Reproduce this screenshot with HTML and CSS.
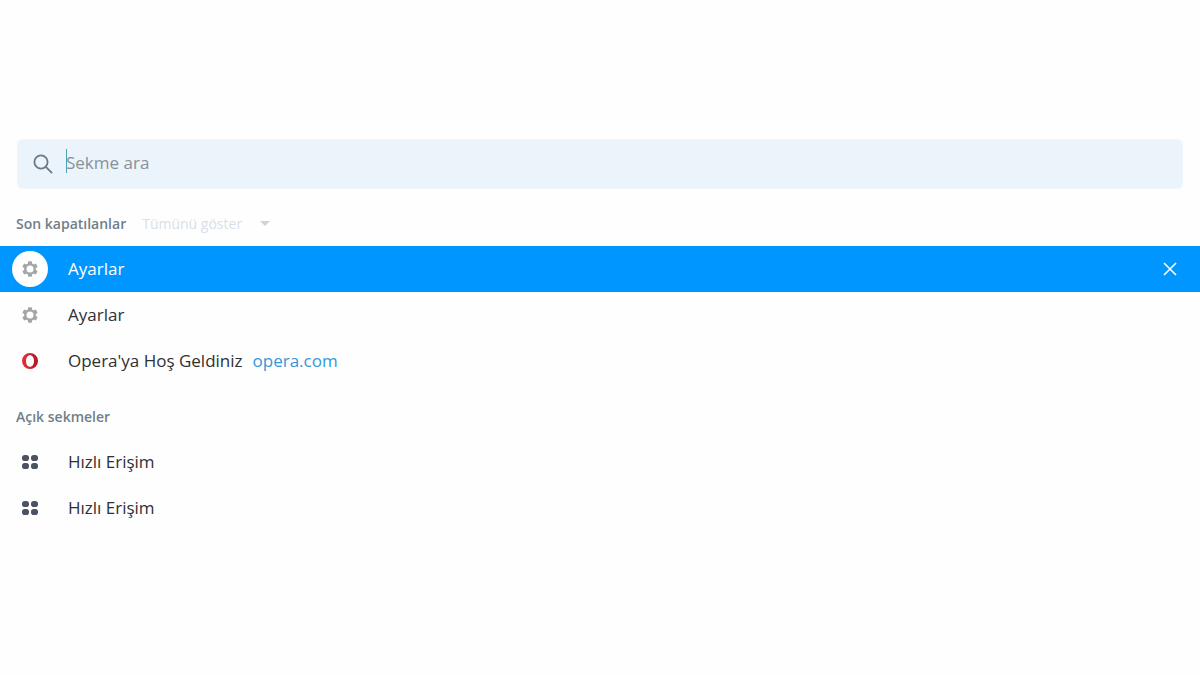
FILE: index.html
```html
<!DOCTYPE html>
<html lang="tr">
<head>
    <title>Sekme ara</title>
    <meta charset="utf-8">
    <meta name="viewport" content="width=device-width, initial-scale=1">
    <link rel="stylesheet" href="styles.css">
</head>
<body>
    <!-- Shared icons -->
    <svg class="sprite" aria-hidden="true">
        <symbol id="gear" viewBox="0 0 16 16">
            <circle cx="8" cy="8" r="4.700" fill="none" stroke="currentColor" stroke-width="2.4"/>
            <g fill="currentColor">
                <rect id="tooth" x="6" y="0.2" width="4" height="3.4" rx="0.8"/>
                <use href="#tooth" transform="rotate(60 8 8)"/>
                <use href="#tooth" transform="rotate(120 8 8)"/>
                <use href="#tooth" transform="rotate(180 8 8)"/>
                <use href="#tooth" transform="rotate(240 8 8)"/>
                <use href="#tooth" transform="rotate(300 8 8)"/>
            </g>
        </symbol>
        <symbol id="tiles" viewBox="0 0 16 16">
            <g fill="currentColor">
                <rect x="0" y="1" width="7" height="6" rx="2.8"/>
                <rect x="9" y="1" width="7" height="6" rx="2.8"/>
                <rect x="0" y="9" width="7" height="6" rx="2.8"/>
                <rect x="9" y="9" width="7" height="6" rx="2.8"/>
            </g>
        </symbol>
    </svg>

    <main class="tab-search">
        <form class="search" role="search">
            <svg class="search-icon" viewBox="0 0 20 20" aria-hidden="true">
                <circle cx="8" cy="8" r="6.6"/>
                <path d="M12.8 12.8 18.6 18.6"/>
            </svg>
            <div class="search-field">
                <span class="caret"></span>
                <input type="text" class="search-input" placeholder="Sekme ara" aria-label="Sekme ara">
            </div>
        </form>

        <section class="group">
            <div class="group-head">
                <h2>Son kapatılanlar</h2>
                <button type="button" class="show-all">
                    Tümünü göster
                    <svg class="arrow" viewBox="0 0 10 5" aria-hidden="true"><path d="M0 0h10L5 5z"/></svg>
                </button>
            </div>
            <ul class="tabs">
                <li class="tab selected">
                    <span class="tab-icon"><svg><use href="#gear"/></svg></span>
                    <span class="title">Ayarlar</span>
                    <button type="button" class="close" aria-label="Kapat">
                        <svg viewBox="0 0 14 14"><path d="M1 1 13 13M13 1 1 13"/></svg>
                    </button>
                </li>
                <li class="tab">
                    <span class="tab-icon"><svg><use href="#gear"/></svg></span>
                    <span class="title">Ayarlar</span>
                </li>
                <li class="tab">
                    <span class="tab-icon">
                        <svg viewBox="0 0 16 16">
                            <defs>
                                <linearGradient id="opera-red" x1="0" y1="0" x2="1" y2="0">
                                    <stop offset="0" stop-color="#e8303c"/>
                                    <stop offset="1" stop-color="#b01622"/>
                                </linearGradient>
                            </defs>
                            <path fill="url(#opera-red)" fill-rule="evenodd" d="M8 0a8 8 0 1 0 0 16A8 8 0 0 0 8 0zM8 2.200c2.400 0 4 2.500 4 5.800s-1.600 5.800-4 5.800-4-2.500-4-5.800 1.600-5.800 4-5.800z"/>
                        </svg>
                    </span>
                    <span class="title">Opera'ya Hoş Geldiniz</span>
                    <a href="https://opera.com" class="site">opera.com</a>
                </li>
            </ul>
        </section>

        <section class="group">
            <div class="group-head">
                <h2>Açık sekmeler</h2>
            </div>
            <ul class="tabs">
                <li class="tab">
                    <span class="tab-icon dark"><svg><use href="#tiles"/></svg></span>
                    <span class="title">Hızlı Erişim</span>
                </li>
                <li class="tab">
                    <span class="tab-icon dark"><svg><use href="#tiles"/></svg></span>
                    <span class="title">Hızlı Erişim</span>
                </li>
            </ul>
        </section>
    </main>
</body>
</html>
```
FILE: styles.css
```css
* {
    box-sizing: border-box;
}
body {
    margin: 0;
    background: #fefefe;
    color: #2f3033;
    font-family: "Open Sans", "Noto Sans", sans-serif;
    font-size: 17px;
}
button {
    border: 0;
    padding: 0;
    background: none;
    font: inherit;
    cursor: pointer;
}
.sprite {
    position: absolute;
    width: 0;
    height: 0;
}
.tab-search {
    padding-top: 139px;
}

/* search box */
.search {
    display: flex;
    align-items: center;
    gap: 13px;
    height: 50px;
    margin: 0 17px;
    padding: 0 16px;
    border-radius: 6px;
    background: #ebf3fb;
}
.search-icon {
    width: 20px;
    height: 20px;
    fill: none;
    stroke: #6b7a85;
    stroke-width: 1.8;
    stroke-linecap: round;
}
.search-field {
    position: relative;
    flex: 1;
}
.search-input {
    display: block;
    width: 100%;
    height: 26px;
    border: 0;
    padding: 0 0 4px;
    background: none;
    color: #2f3033;
    font: inherit;
    outline: none;
}
.search-input::placeholder {
    color: #879199;
    opacity: 1;
}
.caret {
    position: absolute;
    top: -2px;
    left: 0;
    width: 1px;
    height: 24px;
    background: #4fa3b5;
}

/* groups */
.group-head {
    display: flex;
    align-items: center;
    gap: 16px;
    height: 43px;
    margin: 14px 16px 0;
    padding-bottom: 2px;
    font-size: 14px;
}
.group + .group .group-head {
    margin-top: 12px;
}
.group-head h2 {
    margin: 0;
    color: #6f7e89;
    font-size: 14px;
    font-weight: 600;
}
.show-all {
    display: flex;
    align-items: center;
    gap: 18px;
    color: #d8dfe8;
}
.arrow {
    width: 10px;
    height: 5px;
    fill: #ccd3dc;
}

/* tab rows */
.tabs {
    margin: 0;
    padding: 0;
    list-style: none;
}
.tab {
    display: flex;
    align-items: center;
    height: 46px;
    padding: 0 22px 0 12px;
}
.tab-icon {
    display: flex;
    align-items: center;
    justify-content: center;
    width: 36px;
    height: 36px;
    margin-right: 20px;
    border-radius: 50%;
    color: #a3a6a9;
}
.tab-icon svg {
    width: 16px;
    height: 16px;
}
.tab-icon.dark {
    color: #4b5363;
}
.title,
.site {
    padding-bottom: 2px;
}
.site {
    margin-left: 10px;
    color: #3596da;
    text-decoration: none;
}
.selected {
    background: #0096ff;
    color: #fff;
}
.selected .tab-icon {
    background: #fff;
}
.close {
    display: flex;
    align-items: center;
    justify-content: center;
    width: 16px;
    height: 16px;
    margin-left: auto;
    color: #fff;
}
.close svg {
    width: 14px;
    height: 14px;
    fill: none;
    stroke: currentColor;
    stroke-width: 1.6;
}
```
